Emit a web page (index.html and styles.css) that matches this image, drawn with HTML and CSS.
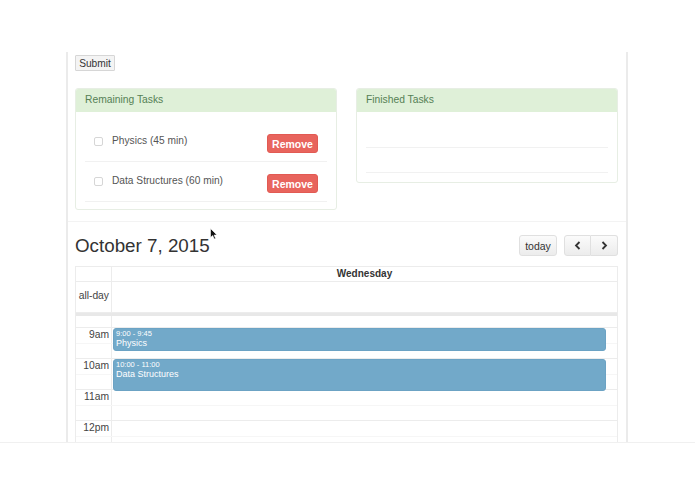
FILE: index.html
```html
<!DOCTYPE html>
<html lang="en">

<head>
	<meta charset="UTF-8">
	<meta name="viewport" content="width=device-width, initial-scale=1.0">
	<title>Study Planner</title>

	<link rel="stylesheet" href="styles.css">

</head>

<body>

	<div class="page">

		<div class="frame">

			<section class="tasks">
				<button class="submit">Submit</button>

				<div class="panels">

					<div class="panel">
						<div class="panel-head">Remaining Tasks</div>
						<ul class="task-list">
							<li>
								<span class="check"></span>
								<span class="task-name">Physics (45 min)</span>
								<button class="remove">Remove</button>
							</li>
							<li>
								<span class="check"></span>
								<span class="task-name">Data Structures (60 min)</span>
								<button class="remove">Remove</button>
							</li>
						</ul>
					</div>

					<div class="panel">
						<div class="panel-head">Finished Tasks</div>
						<ul class="task-list finished">
							<li></li>
							<li></li>
						</ul>
					</div>

				</div>
			</section>

			<section class="calendar">

				<div class="toolbar">
					<h2>October 7, 2015</h2>
					<div class="tools">
						<button class="fc-btn today">today</button>
						<div class="btn-group">
							<button class="fc-btn arrow">
								<svg width="8" height="9" viewBox="0 0 8 9"><path d="M5.5 1 L2 4.5 L5.5 8" fill="none" stroke="#333" stroke-width="1.8"/></svg>
							</button>
							<button class="fc-btn arrow">
								<svg width="8" height="9" viewBox="0 0 8 9"><path d="M2.5 1 L6 4.5 L2.5 8" fill="none" stroke="#333" stroke-width="1.8"/></svg>
							</button>
						</div>
					</div>
				</div>

				<div class="cal">
					<div class="cal-row cal-head">
						<div class="axis"></div>
						<div class="day">Wednesday</div>
					</div>
					<div class="cal-row cal-allday">
						<div class="axis">all-day</div>
						<div class="day"></div>
					</div>
					<div class="cal-divider"></div>

					<div class="cal-body">
						<div class="cal-row slot partial">
							<div class="axis"></div>
							<div class="day"></div>
						</div>

						<div class="cal-row slot half">
							<div class="axis">9am</div>
							<div class="day"></div>
						</div>
						<div class="cal-row slot">
							<div class="axis"></div>
							<div class="day"></div>
						</div>

						<div class="cal-row slot half">
							<div class="axis">10am</div>
							<div class="day"></div>
						</div>
						<div class="cal-row slot">
							<div class="axis"></div>
							<div class="day"></div>
						</div>

						<div class="cal-row slot half">
							<div class="axis">11am</div>
							<div class="day"></div>
						</div>
						<div class="cal-row slot">
							<div class="axis"></div>
							<div class="day"></div>
						</div>

						<div class="cal-row slot half">
							<div class="axis">12pm</div>
							<div class="day"></div>
						</div>
						<div class="cal-row slot">
							<div class="axis"></div>
							<div class="day"></div>
						</div>

						<!-- events sit on top of the slot grid -->
						<div class="event ev-physics">
							<div class="ev-time">9:00 - 9:45</div>
							<div class="ev-title">Physics</div>
						</div>
						<div class="event ev-ds">
							<div class="ev-time">10:00 - 11:00</div>
							<div class="ev-title">Data Structures</div>
						</div>
					</div>
				</div>

				<svg class="cursor" width="8" height="12" viewBox="0 0 8 12"><path d="M0.5 0.5 L0.5 9.5 L2.7 7.6 L4.2 11 L5.6 10.4 L4.1 7.1 L7 7 Z" fill="#111" stroke="#fff" stroke-width="0.6"/></svg>

			</section>

		</div>

		<div class="bottom-line"></div>

	</div>

</body>

</html>
```

FILE: styles.css
```css
* {
	box-sizing: border-box;
	font-family: "Liberation Sans", Arial, sans-serif;
}

body {
	margin: 0;
	background: #fff;
}

ul {
	margin: 0;
	padding: 0;
}

ul>li {
	list-style-type: none;
}

button {
	margin: 0;
	cursor: pointer;
}

.page {
	padding-top: 52px;
}

.frame {
	margin-left: 66px;
	width: 562px;
	height: 390px;
	border-left: 2px solid #ebebeb;
	border-right: 2px solid #ebebeb;
	overflow: hidden;
}

.bottom-line {
	height: 1px;
	background: #f0f0f0;
}

/* tasks */

.tasks {
	padding: 3px 8px 11px 7px;
}

.submit {
	display: block;
	height: 16px;
	width: 40px;
	padding: 0;
	font-size: 10.2px;
	color: #333;
	background: #f4f4f4;
	border: 1px solid #d6d6d6;
	border-radius: 1px;
}

.panels {
	display: flex;
	align-items: flex-start;
	gap: 19px;
	margin-top: 17px;
}

.panel {
	width: 262px;
	border: 1px solid #e7eee4;
	border-radius: 3px;
	overflow: hidden;
}

.panel-head {
	height: 23px;
	padding: 5px 0 0 9px;
	font-size: 10.3px;
	color: #558055;
	background: #dff0d8;
}

.task-list {
	padding: 10px 9px 7px 9px;
}

.task-list>li {
	display: flex;
	align-items: center;
	height: 40px;
	padding: 0 9px 0 9px;
	border-bottom: 1px solid #f1f1f1;
}

.task-list.finished {
	padding-bottom: 9px;
}

.task-list.finished>li {
	height: 26px;
}

.task-list.finished>li+li {
	height: 25px;
}

.check {
	width: 9px;
	height: 9px;
	border: 1px solid #d6d6d6;
	border-radius: 2px;
	margin-right: 9px;
	margin-top: -1px;
}

.task-name {
	flex: 1;
	font-size: 10.2px;
	color: #555;
	margin-top: -2px;
}

.remove {
	width: 51px;
	height: 19px;
	padding: 0;
	margin-top: 4px;
	font-size: 10.5px;
	font-weight: bold;
	color: #fff;
	background: #e8645d;
	border: 1px solid #e25a53;
	border-radius: 3px;
}

/* calendar */

.calendar {
	position: relative;
	padding: 13px 8px 0 7px;
	border-top: 1px solid #f3f3f3;
}

.toolbar {
	display: flex;
	justify-content: space-between;
	align-items: center;
	height: 21px;
	margin-bottom: 10px;
}

.toolbar h2 {
	margin: 0;
	font-size: 18.8px;
	font-weight: normal;
	color: #333;
	line-height: 21px;
}

.tools {
	display: flex;
	gap: 7px;
}

.fc-btn {
	height: 21px;
	padding: 0;
	font-size: 10.5px;
	color: #333;
	background: linear-gradient(#fbfbfb, #ececec);
	border: 1px solid #e0e0e0;
	border-radius: 3px;
}

.today {
	width: 38px;
}

.btn-group {
	display: flex;
}

.arrow {
	width: 27px;
	display: flex;
	align-items: center;
	justify-content: center;
}

.btn-group .arrow:first-child {
	border-radius: 3px 0 0 3px;
}

.btn-group .arrow:last-child {
	border-left: none;
	border-radius: 0 3px 3px 0;
}

.cal {
	border: 1px solid #ececec;
	border-bottom: none;
}

.cal-row {
	display: grid;
	grid-template-columns: 36px 1fr;
	border-bottom: 1px solid #ececec;
}

.axis {
	border-right: 1px solid #ececec;
	text-align: right;
	padding-right: 2px;
	font-size: 10.3px;
	color: #444;
}

.cal-head {
	height: 15px;
}

.cal-head .day {
	text-align: center;
	font-size: 10px;
	font-weight: bold;
	color: #333;
	line-height: 14px;
}

.cal-allday {
	height: 31px;
}

.cal-allday .axis {
	line-height: 28px;
}

.cal-divider {
	height: 3px;
	background: #e8e8e8;
}

.cal-body {
	position: relative;
}

.slot {
	height: 15px;
}

.slot.partial {
	height: 12px;
}

.slot.half {
	height: 16px;
	border-bottom-color: #f6f6f6;
}

.slot.half .axis {
	line-height: 14px;
}

.event {
	position: absolute;
	left: 37px;
	width: 493px;
	padding: 0 0 0 2px;
	color: #fff;
	background: #72a9c9;
	border: 1px solid #6ca3c4;
	border-radius: 3px;
}

.ev-physics {
	top: 12px;
	height: 23px;
}

.ev-ds {
	top: 43px;
	height: 32px;
}

.ev-time {
	font-size: 7.5px;
	line-height: 9px;
}

.ev-title {
	font-size: 9px;
	line-height: 11px;
}

.cursor {
	position: absolute;
	left: 142px;
	top: 6px;
}
```
